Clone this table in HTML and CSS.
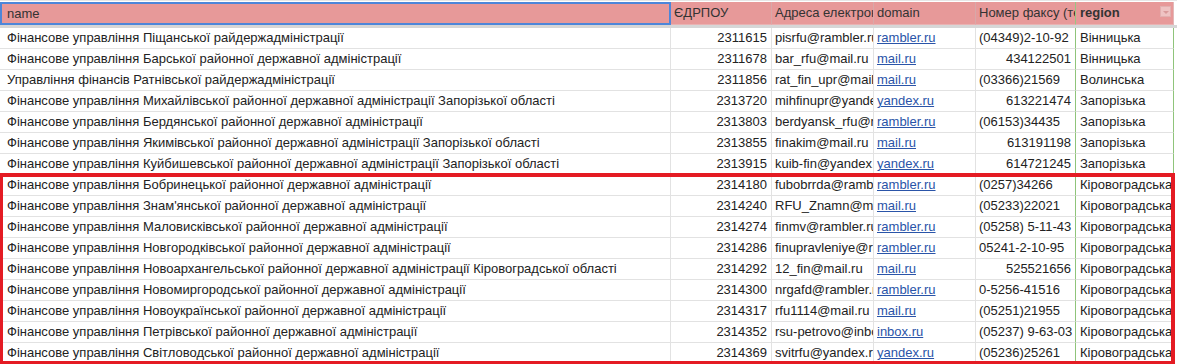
FILE: index.html
```html
<!DOCTYPE html>
<html lang="uk">
<head>
<meta charset="utf-8">
<title>Sheet</title>
<link rel="stylesheet" href="styles.css">
</head>
<body>
<div class="sheet">
  <div class="grid">
    <div class="c h c-name sel">name</div>
    <div class="c h">ЄДРПОУ</div>
    <div class="c h">Адреса електронної пошти</div>
    <div class="c h">domain</div>
    <div class="c h">Номер факсу (телефону)</div>
    <div class="c h c-reg b">region<span class="filter"></span></div>
  </div>
  <div class="freeze"></div>
  <div class="grid">
    <div class="c c-name">Фінансове управління Піщанської райдержадміністрації</div><div class="c r">2311615</div><div class="c">pisrfu@rambler.ru</div><div class="c"><a>rambler.ru</a></div><div class="c">(04349)2-10-92</div><div class="c c-reg">Вінницька</div>
    <div class="c c-name">Фінансове управління Барської районної державної адміністрації</div><div class="c r">2311678</div><div class="c">bar_rfu@mail.ru</div><div class="c"><a>mail.ru</a></div><div class="c r">434122501</div><div class="c c-reg">Вінницька</div>
    <div class="c c-name">Управління фінансів Ратнівської райдержадміністрації</div><div class="c r">2311856</div><div class="c">rat_fin_upr@mail.ru</div><div class="c"><a>mail.ru</a></div><div class="c">(03366)21569</div><div class="c c-reg">Волинська</div>
    <div class="c c-name">Фінансове управління Михайлівської районної державної адміністрації Запорізької області</div><div class="c r">2313720</div><div class="c">mihfinupr@yandex.ru</div><div class="c"><a>yandex.ru</a></div><div class="c r">613221474</div><div class="c c-reg">Запорізька</div>
    <div class="c c-name">Фінансове управління Бердянської районної державної адміністрації</div><div class="c r">2313803</div><div class="c">berdyansk_rfu@mail.ru</div><div class="c"><a>rambler.ru</a></div><div class="c">(06153)34435</div><div class="c c-reg">Запорізька</div>
    <div class="c c-name">Фінансове управління Якимівської районної державної адміністрації Запорізької області</div><div class="c r">2313855</div><div class="c">finakim@mail.ru</div><div class="c"><a>mail.ru</a></div><div class="c r">613191198</div><div class="c c-reg">Запорізька</div>
    <div class="c c-name">Фінансове управління Куйбишевської районної державної адміністрації Запорізької області</div><div class="c r">2313915</div><div class="c">kuib-fin@yandex.ru</div><div class="c"><a>yandex.ru</a></div><div class="c r">614721245</div><div class="c c-reg">Запорізька</div>
    <div class="c c-name">Фінансове управління Бобринецької районної державної адміністрації</div><div class="c r">2314180</div><div class="c">fubobrrda@rambler.ru</div><div class="c"><a>rambler.ru</a></div><div class="c">(0257)34266</div><div class="c c-reg">Кіровоградська</div>
    <div class="c c-name">Фінансове управління Знам'янської районної державної адміністрації</div><div class="c r">2314240</div><div class="c">RFU_Znamn@mail.ru</div><div class="c"><a>mail.ru</a></div><div class="c">(05233)22021</div><div class="c c-reg">Кіровоградська</div>
    <div class="c c-name">Фінансове управління Маловисківської районної державної адміністрації</div><div class="c r">2314274</div><div class="c">finmv@rambler.ru</div><div class="c"><a>rambler.ru</a></div><div class="c">(05258) 5-11-43</div><div class="c c-reg">Кіровоградська</div>
    <div class="c c-name">Фінансове управління Новгородківської районної державної адміністрації</div><div class="c r">2314286</div><div class="c">finupravleniye@rambler.ru</div><div class="c"><a>rambler.ru</a></div><div class="c">05241-2-10-95</div><div class="c c-reg">Кіровоградська</div>
    <div class="c c-name">Фінансове управління Новоархангельської районної державної адміністрації Кіровоградської області</div><div class="c r">2314292</div><div class="c">12_fin@mail.ru</div><div class="c"><a>mail.ru</a></div><div class="c r">525521656</div><div class="c c-reg">Кіровоградська</div>
    <div class="c c-name">Фінансове управління Новомиргородської районної державної адміністрації</div><div class="c r">2314300</div><div class="c">nrgafd@rambler.ru</div><div class="c"><a>rambler.ru</a></div><div class="c">0-5256-41516</div><div class="c c-reg">Кіровоградська</div>
    <div class="c c-name">Фінансове управління Новоукраїнської районної державної адміністрації</div><div class="c r">2314317</div><div class="c">rfu1114@mail.ru</div><div class="c"><a>mail.ru</a></div><div class="c">(05251)21955</div><div class="c c-reg">Кіровоградська</div>
    <div class="c c-name">Фінансове управління Петрівської районної державної адміністрації</div><div class="c r">2314352</div><div class="c">rsu-petrovo@inbox.ru</div><div class="c"><a>inbox.ru</a></div><div class="c">(05237) 9-63-03</div><div class="c c-reg">Кіровоградська</div>
    <div class="c c-name">Фінансове управління Світловодської районної державної адміністрації</div><div class="c r">2314369</div><div class="c">svitrfu@yandex.ru</div><div class="c"><a>yandex.ru</a></div><div class="c">(05236)25261</div><div class="c c-reg">Кіровоградська</div>
  </div>
  <div class="mark"></div>
</div>
</body>
</html>
```

FILE: styles.css
```css
* { box-sizing: border-box; }
html, body { margin: 0; padding: 0; background: #fff; }
body {
  font-family: "Liberation Sans", Arial, sans-serif;
  font-size: 13px;
  color: #222;
  width: 1177px;
  height: 364px;
  overflow: hidden;
}
.sheet {
  position: relative;
  padding-top: 1px;
  border-top: 1px solid #e6e6e6;
}
.grid {
  display: grid;
  grid-template-columns: 671px 101px 102px 102px 100px 98px;
}
.c {
  height: 21px;
  line-height: 20px;
  padding: 0 3px 0 3px;
  white-space: nowrap;
  overflow: hidden;
  border-right: 1px solid #e2e2e2;
  border-bottom: 1px solid #e2e2e2;
}
.c-name { padding-left: 7px; }
.r { text-align: right; padding-right: 4px; }
.c a { color: #2a54a8; text-decoration: underline; }
.c-reg {
  border-left: 1px solid #8fc47a;
  border-right: 1px solid #8fc47a;
  margin-left: -1px;
  padding-left: 4px;
  font-weight: normal;
}
.h {
  height: 23px;
  line-height: 22px;
  background: #e79999;
  color: #333;
  border-right-color: #d8a8a8;
  border-bottom: 1px solid #e8b2b2;
}
.h.c-reg { border-left-color: #9ac583; border-right-color: #e3b9b9; position: relative; }
.h.b { font-weight: bold; }
.sel {
  border: 2px solid #4d86d9;
  padding-left: 5px;
  line-height: 20px;
}
.filter {
  position: absolute;
  right: 2px;
  top: 4px;
  width: 11px;
  height: 11px;
  background: #efc3c3;
  border: 1px solid #e2b0b0;
}
.filter::after {
  content: "";
  position: absolute;
  left: 2px;
  top: 4px;
  border-left: 3px solid transparent;
  border-right: 3px solid transparent;
  border-top: 3px solid #d99a9a;
}
.freeze {
  height: 3px;
  background: #d6d6d6;
}
.mark {
  position: absolute;
  left: 0;
  top: 172px;
  width: 1175px;
  height: 192px;
  border: 4px solid #e41b23;
  border-left-width: 3px;
  pointer-events: none;
}
```
